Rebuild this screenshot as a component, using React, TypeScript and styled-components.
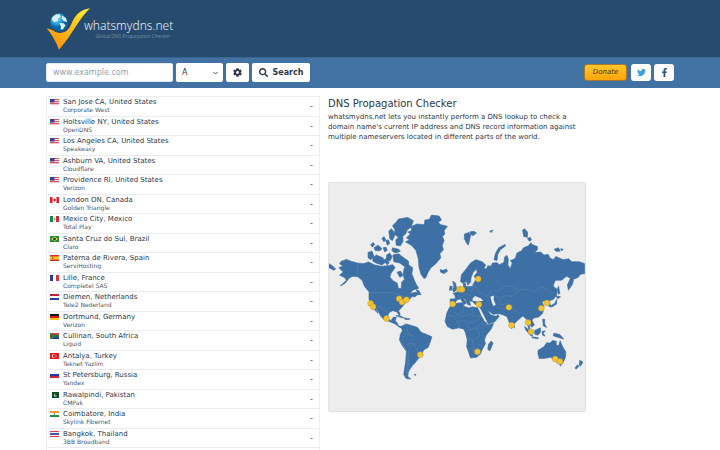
import React from "react";
import styled, { createGlobalStyle } from "styled-components";
import { FaCog, FaFacebookF, FaSearch, FaTwitter } from "react-icons/fa";

const GlobalStyle = createGlobalStyle`
  *, *::before, *::after { box-sizing: border-box; }
  body {
    margin: 0;
    background: #fff;
    color: #2d3748;
    font-family: "DejaVu Sans", sans-serif;
    font-size: 7px;
  }
  button, input, select { font-family: inherit; }
`;

const Header = styled.header`
  height: 57px;
  padding: 7px 46px 0;
  background: #264b6e;
`;

const Brand = styled.a`
  display: inline-flex;
  color: #e8eef5;
  text-decoration: none;
`;

const BrandMark = styled.svg`
  width: 45px;
  height: 43px;
`;

const BrandText = styled.span`
  display: flex;
  flex-direction: column;
  align-items: flex-end;
  margin-left: -7px;
  padding-top: 11px;
`;

const BrandName = styled.span`
  font: 300 12px/15px "Noto Sans", sans-serif;
`;

const Tagline = styled.span`
  padding-right: 3px;
  color: #8ba8c4;
  font: 300 5px/6px "Noto Sans", sans-serif;
`;

const Toolbar = styled.div`
  display: flex;
  align-items: center;
  justify-content: space-between;
  height: 31px;
  padding: 0 46px 1px;
  background: #4271a4;
  border-top: 1px solid #396693;
`;

const SearchForm = styled.form`
  display: flex;
  gap: 3px;
`;

const DomainInput = styled.input`
  width: 127px;
  height: 19px;
  padding: 0 6px;
  border: 1px solid #e2e8f0;
  border-radius: 2px;
  background: #fff;
  color: #4a5568;
  font-size: 8px;
  &::placeholder { color: #949fac; opacity: 1; }
`;

const SelectWrap = styled.label`
  display: flex;
  align-items: center;
  width: 47px;
  height: 19px;
  padding-right: 5px;
  border-radius: 2px;
  background: #fff;
`;

const TypeSelect = styled.select`
  flex: 1;
  min-width: 0;
  height: 19px;
  padding: 0 6px;
  border: 0;
  appearance: none;
  background: transparent;
  color: #2d3748;
  font-size: 8px;
`;

const Chevron = styled.svg`
  flex: none;
  width: 5px;
  height: 4px;
`;

const Button = styled.button<{ $width: number }>`
  display: flex;
  align-items: center;
  justify-content: center;
  gap: 5px;
  width: ${(p) => p.$width}px;
  height: 19px;
  padding: 0;
  border: 0;
  border-radius: 2px;
  background: #fff;
  color: #2d3748;
  font-size: 8px;
  font-weight: 700;
  svg { font-size: 9px; }
`;

const Actions = styled.nav`
  display: flex;
  align-items: center;
  gap: 3px;
`;

const Donate = styled.a`
  width: 43px;
  height: 17px;
  margin-right: 1px;
  border: 1px solid #a9782c;
  border-radius: 3px;
  background: linear-gradient(#ffc62b, #fba50a);
  color: #453313;
  font-size: 7px;
  font-style: italic;
  line-height: 15px;
  text-align: center;
  text-decoration: none;
`;

const SocialLink = styled.a<{ $color: string }>`
  display: flex;
  align-items: center;
  justify-content: center;
  width: 20px;
  height: 17px;
  border-radius: 3px;
  background: #fff;
  color: ${(p) => p.$color};
  font-size: 9px;
`;

const Content = styled.main`
  display: grid;
  grid-template-columns: minmax(0, 274fr) minmax(0, 258fr) 80px;
  column-gap: 8px;
  padding: 8px 46px 0;
`;

const ServerList = styled.ul`
  display: grid;
  grid-auto-rows: 20px 19px;
  margin: 0;
  padding: 0 0 2px;
  border: 1px solid #edf0f3;
  border-bottom: 0;
  list-style: none;
`;

const ServerRow = styled.li`
  display: grid;
  grid-template-columns: 9px 1fr auto;
  column-gap: 4px;
  padding: 0 6px 0 3px;
  border-bottom: 1px solid #e9edf1;
`;

const Flag = styled.svg`
  width: 9px;
  height: 6px;
  margin-top: 2px;
`;

const Place = styled.div`
  color: #2d3748;
  font-size: 7px;
  line-height: 10px;
  white-space: nowrap;
`;

const Provider = styled.div`
  color: #4a5568;
  font-size: 6px;
  line-height: 6px;
`;

const Result = styled.span`
  align-self: center;
  color: #4a5568;
  font-size: 8px;
`;

const About = styled.section`
  display: flex;
  flex-direction: column;
`;

const Title = styled.h1`
  margin: 0;
  font-size: 10px;
  font-weight: 400;
  line-height: 15px;
`;

const Description = styled.p`
  margin: 1px 0 40px;
  font-size: 7px;
  line-height: 10px;
`;

const WorldMap = styled.svg`
  display: block;
  width: 100%;
  border: 1px solid #e0e3e6;
  border-radius: 2px;
  background: #ededed;
`;

type Country =
  | "us" | "ca" | "mx" | "br" | "es" | "fr" | "nl" | "de" | "za"
  | "tr" | "ru" | "pk" | "in" | "th";

const bands = (...colors: string[]) =>
  colors.map((c, i) => (
    <rect key={i} y={(i * 12) / colors.length} width="18" height={12 / colors.length} fill={c} />
  ));

const flags: Record<Country, React.ReactNode> = {
  us: <>{bands("#d9525c", "#f7dcdf", "#d9525c", "#f7dcdf", "#d9525c", "#f0c4c9")}<rect width="9" height="7" fill="#3a3f96" /></>,
  ca: <><rect width="18" height="12" fill="#e01b24" /><rect x="5" width="8" height="12" fill="#fff" /><path d="M9 2l1 2 2 1-1 3H9.500v2h-1V8H7L6 5l2-1z" fill="#e01b24" /></>,
  mx: <><rect width="18" height="12" fill="#fff" /><rect width="6" height="12" fill="#138a4b" /><rect x="12" width="6" height="12" fill="#d4283b" /><circle cx="9" cy="6" r="2" fill="#a98a64" /></>,
  br: <><rect width="18" height="12" fill="#17902f" /><path d="M9 1l7 5-7 5-7-5z" fill="#f1d531" /><circle cx="9" cy="6" r="3" fill="#253d86" /></>,
  es: <><rect width="18" height="12" fill="#d62d2d" /><rect y="3" width="18" height="6" fill="#fbc92c" /><rect x="4" y="4" width="3" height="4" fill="#c3622d" /></>,
  fr: <><rect width="18" height="12" fill="#fff" /><rect width="6" height="12" fill="#2a3c98" /><rect x="12" width="6" height="12" fill="#e23240" /></>,
  nl: bands("#c4213a", "#fff", "#20429a"),
  de: bands("#151515", "#d91a1a", "#f7c614"),
  za: <>{bands("#dc3a32", "#fff", "#29409b")}<path d="M0 0h4l5 4h9v4H9l-5 4H0z" fill="#187b50" /><path d="M0 2l6 4-6 4z" fill="#151515" stroke="#f0b82c" /></>,
  tr: <><rect width="18" height="12" fill="#e51b24" /><circle cx="7" cy="6" r="3.500" fill="#fff" /><circle cx="8" cy="6" r="2.600" fill="#e51b24" /><circle cx="12" cy="6" r="1.200" fill="#fff" /></>,
  ru: bands("#f5f5f5", "#2438ad", "#d42434"),
  pk: <><rect width="18" height="12" fill="#0c4f22" /><rect width="4" height="12" fill="#fff" /><circle cx="11" cy="6" r="3" fill="#fff" /><circle cx="12" cy="5" r="2.600" fill="#0c4f22" /></>,
  in: <>{bands("#f69a35", "#fff", "#24923a")}<circle cx="9" cy="6" r="1.500" fill="#3a4597" /></>,
  th: bands("#db3d4c", "#f4f1f5", "#4f53a5", "#4f53a5", "#f4f1f5", "#db3d4c"),
};

const servers: [Country, string, string][] = [
  ["us", "San Jose CA, United States", "Corporate West"],
  ["us", "Holtsville NY, United States", "OpenDNS"],
  ["us", "Los Angeles CA, United States", "Speakeasy"],
  ["us", "Ashburn VA, United States", "Cloudflare"],
  ["us", "Providence RI, United States", "Verizon"],
  ["ca", "London ON, Canada", "Golden Triangle"],
  ["mx", "Mexico City, Mexico", "Total Play"],
  ["br", "Santa Cruz do Sul, Brazil", "Claro"],
  ["es", "Paterna de Rivera, Spain", "ServiHosting"],
  ["fr", "Lille, France", "Completel SAS"],
  ["nl", "Diemen, Netherlands", "Tele2 Nederland"],
  ["de", "Dortmund, Germany", "Verizon"],
  ["za", "Cullinan, South Africa", "Liquid"],
  ["tr", "Antalya, Turkey", "Teknet Yazlim"],
  ["ru", "St Petersburg, Russia", "Yandex"],
  ["pk", "Rawalpindi, Pakistan", "CMPak"],
  ["in", "Coimbatore, India", "Skylink Fibernet"],
  ["th", "Bangkok, Thailand", "3BB Broadband"],
];

const westernLand = [
  // North and Central America
  "48,243 65,237 80,243 98,248 115,250 132,245 150,254 170,258 190,256 205,253 212,262 200,278 196,290 206,302 218,308 222,325 230,325 232,305 240,298 236,280 240,262 250,268 262,280 270,300 276,313 283,324 265,330 258,340 272,336 285,340 272,350 262,350 255,358 246,365 236,377 228,387 222,392 227,402 225,408 218,396 205,392 195,397 190,405 192,418 200,422 206,412 216,412 212,422 219,430 222,438 232,440 238,446 226,443 212,432 195,425 178,419 168,408 163,398 153,383 150,380 160,400 150,390 140,372 133,358 133,335 120,320 112,300 100,290 85,288 75,292 60,310 46,317 65,300 58,291 44,285 55,275 42,262 54,257 44,250",
  // South America
  "230,440 245,432 262,437 280,443 290,457 305,463 323,471 318,487 312,503 298,511 292,525 280,540 272,550 265,557 258,567 252,577 250,590 259,599 245,597 238,585 240,570 244,545 246,515 232,495 225,480 228,463 234,453",
  // Greenland
  "243,184 256,178 246,172 258,160 250,154 262,150 260,138 278,130 300,132 302,118 315,116 322,103 345,106 352,118 342,125 350,132 370,137 360,150 362,160 355,168 360,180 354,195 358,208 347,220 350,232 335,250 320,262 312,275 305,292 299,295 290,282 284,260 282,235 275,210 262,195",
  // Ellesmere and Axel Heiberg
  "204,135 215,125 222,115 250,110 267,120 260,140 248,148 245,158 235,168 236,182 228,196 215,194 214,178 222,170 208,160 212,148",
  "193,152 200,144 206,150 210,165 204,180 196,175",
  // Baffin and Canadian archipelago
  "205,224 222,220 238,232 252,242 253,254 265,262 263,278 250,276 242,260 226,248 208,244",
  "145,232 155,224 175,232 182,246 172,254 154,248 144,242",
  "130,216 142,212 148,228 138,238 130,232",
  "186,224 196,218 203,230 196,242 186,238",
  "204,202 222,206 228,212 212,218 202,210",
  "138,192 146,186 150,192 143,200",
  "148,202 160,194 172,204 166,211 152,210",
  "172,174 178,168 184,178 178,184",
  "184,180 192,178 195,190 188,194",
  "176,202 184,200 188,210 180,214",
  "184,234 178,240 188,254 194,246",
  "218,276 228,272 236,286 226,291",
  // Newfoundland, Iceland, Alaskan islands
  "276,328 284,332 290,344 280,342",
  "348,268 358,270 367,266 370,273 360,280 350,276",
  "12,250 22,256 32,266 27,270 18,265 12,262",
  // Caribbean
  "214,407 228,408 240,414 230,413",
  "241,414 257,417 251,419 241,418",
  // Falklands
  "269,585 275,585 273,588",
];

const easternLand = [
  // Eurasia
  "-10,375 -12,357 5,356 2,345 -3,340 8,336 18,326 29,320 28,308 35,310 36,320 56,318 60,308 65,300 82,296 78,288 64,294 61,288 70,276 68,266 58,276 52,290 50,305 42,315 38,304 27,309 20,304 22,284 35,268 50,248 66,238 85,244 96,254 90,264 98,266 102,256 112,258 116,248 130,247 137,253 151,246 153,230 160,225 164,236 163,254 170,265 176,248 170,240 180,237 186,232 190,218 204,211 210,202 225,196 232,187 238,193 252,198 252,208 244,216 262,215 272,224 285,222 290,233 300,238 308,228 330,238 347,235 355,244 378,244 395,250 395,280 382,282 375,292 362,296 358,312 346,330 343,314 352,294 340,288 325,300 307,300 302,310 300,318 312,328 310,345 300,358 288,362 292,378 284,377 276,362 266,364 272,380 268,400 256,411 242,414 235,420 243,435 235,442 226,430 232,458 225,445 219,418 208,408 192,422 178,436 174,446 168,430 160,410 147,404 130,400 136,410 124,425 104,432 92,412 78,390 75,378 86,371 64,373 56,364 47,362 50,376 42,374 34,357 27,352 38,369 31,373 19,356 8,360 2,373",
  // Africa
  "-8,375 12,369 27,368 30,379 45,384 55,380 76,385 85,405 95,425 102,435 120,430 112,448 98,465 92,480 95,492 85,510 80,523 68,533 50,535 45,520 38,500 40,480 35,460 30,448 15,444 -5,448 -20,440 -27,425 -22,400 -15,385",
  // Arctic islands
  "32,160 44,156 50,164 47,178 43,194 37,186 31,174",
  "47,154 60,152 68,157 58,165 50,162",
  "108,151 118,149 112,156",
  "121,238 125,220 135,202 154,192 156,196 140,208 132,222 130,240",
  "207,149 213,144 222,154 222,170 211,168",
  "222,174 230,170 234,178 228,182",
  "303,206 316,202 321,212 308,212",
  "322,205 330,206 326,211",
  // British Isles
  "-4,303 4,308 9,328 -1,336 -5,328 0,320",
  "-12,318 -5,318 -8,330 -14,330",
  // Madagascar and Sri Lanka
  "112,484 118,490 108,514 102,508 104,494",
  "178,434 184,438 182,444 178,442",
  // Japan and Sakhalin
  "316,318 320,340 315,342 312,326",
  "308,347 322,350 314,356",
  "311,358 310,372 296,381 288,380 304,370",
  // South-east Asia
  "213,440 226,450 238,468 232,468 218,452",
  "236,471 255,474 254,477 236,474",
  "244,452 261,444 262,456 254,466 244,463",
  "266,455 276,453 270,460 275,469 268,466",
  "268,418 274,418 274,432 280,443 270,438",
  "302,460 320,464 332,478 316,473 300,468",
  // Australia, Tasmania, New Zealand
  "254,512 272,501 280,489 290,490 298,482 310,485 308,494 316,499 321,483 328,500 338,517 337,533 328,552 316,553 302,540 292,533 275,536 258,537 254,524",
  "319,553 325,554 322,560",
  "380,542 390,548 382,560 379,556",
  "373,556 378,560 369,569 366,565",
];

const seas = [
  "56,355 64,348 82,355 88,362 70,364 56,362",
  "110,350 120,347 120,360 126,374 119,378 114,366",
  "72,382 78,383 88,402 99,425 94,426 82,405",
  "103,392 118,404 132,402 128,408 112,404",
];

const westernBorders =
  "M98 248V290 M133 338H208L224 344 240 350 M146 375 172 384 190 400 M245 435 252 463 270 470 M246 515 232 485 246 462 M246 495 264 490 278 507 280 530 M250 525 255 560 248 585 M248 580 252 515";
const easternBorders =
  "M58 315 68 323 76 335 90 340 M96 352 116 330 132 333 150 320 172 317 194 330 220 326 242 335 263 319 285 330 300 340 M116 345 140 354 158 345 175 350 194 330 M138 357 142 374 160 370 172 360 M130 380 150 388 160 378 175 388 200 400 M50 300 60 322 50 340 M10 345 24 350 35 340 52 350 M0 395 22 410 48 403 70 410 85 410 M-20 405 0 410 12 430 24 420 48 430 78 418 M30 379 25 400 M55 382V405 M15 430V442 M38 430 47 450 68 444 78 430 105 440 M40 475 60 480 82 466 96 475 M40 508 62 508 78 495 92 500 M56 480 60 522 M68 444 78 466 M84 436 86 458";

const markers = [
  [126, 364], [133, 374], [212, 350], [221, 360], [234, 353], [174, 410],
  [276, 519], [374, 366], [395, 321], [402, 322], [451, 290], [453, 367],
  [544, 376], [552, 430], [602, 422], [611, 450], [642, 379], [659, 363],
  [449, 510], [684, 532], [698, 540],
];

const Land = ({ shapes, borders, x }: { shapes: string[]; borders: string; x: number }) => (
  <g transform={`translate(${x} -6)`}>
    {shapes.map((points) => (
      <polygon
        key={points}
        points={points}
        fill="#3d70a5"
        stroke="#3d70a5"
        strokeWidth="2"
        strokeLinejoin="round"
      />
    ))}
    <path d={borders} fill="none" stroke="#7198bf" strokeWidth="1" />
  </g>
);

export default function App() {
  return (
    <>
      <GlobalStyle />
      <Header>
        <Brand href="#">
          <BrandMark viewBox="18 20 134 130" aria-hidden="true">
            <defs>
              <linearGradient id="tick" x1="0" y1="1" x2="1" y2="0">
                <stop offset="0" stopColor="#f78a0c" />
                <stop offset="0.500" stopColor="#fdb81b" />
                <stop offset="1" stopColor="#fff02e" />
              </linearGradient>
              <radialGradient id="globe" cx="0.350" cy="0.300">
                <stop offset="0" stopColor="#8bdcf8" />
                <stop offset="0.600" stopColor="#27a0dc" />
                <stop offset="1" stopColor="#0865a8" />
              </radialGradient>
            </defs>
            <path d="M19 84Q38 88 55 98Q82 100 93 73C105 44 120 28 150 24C120 50 94 108 56 149Q43 112 19 84Z" fill="url(#tick)" />
            <circle cx="58" cy="66" r="32" fill="#264b6e" />
            <circle cx="57" cy="66" r="27" fill="url(#globe)" />
            <path d="M35 54Q43 40 58 42L62 50 54 54 52 62 42 66 36 61ZM66 46L77 53 81 65 71 63 64 55ZM57 68L70 69 76 75 68 88 61 87 62 78Z" fill="#d5f1f4" />
          </BrandMark>
          <BrandText>
            <BrandName>whatsmydns.net</BrandName>
            <Tagline>Global DNS Propagation Checker</Tagline>
          </BrandText>
        </Brand>
      </Header>
      <Toolbar>
        <SearchForm onSubmit={(e) => e.preventDefault()}>
          <DomainInput type="text" aria-label="Domain name" placeholder="www.example.com" />
          <SelectWrap>
            <TypeSelect aria-label="Record type" defaultValue="A">
              <option>A</option>
              <option>AAAA</option>
              <option>CNAME</option>
              <option>MX</option>
            </TypeSelect>
            <Chevron viewBox="0 0 10 8" aria-hidden="true">
              <path d="M1 2l4 4 4-4" fill="none" stroke="#4a5568" strokeWidth="2" />
            </Chevron>
          </SelectWrap>
          <Button type="button" aria-label="Options" $width={23}><FaCog /></Button>
          <Button type="submit" $width={58}><FaSearch />Search</Button>
        </SearchForm>
        <Actions>
          <Donate href="#">Donate</Donate>
          <SocialLink href="#" aria-label="Twitter" $color="#3ea1d8"><FaTwitter /></SocialLink>
          <SocialLink href="#" aria-label="Facebook" $color="#2f4f86"><FaFacebookF /></SocialLink>
        </Actions>
      </Toolbar>
      <Content>
        <ServerList>
          {servers.map(([country, place, provider]) => (
            <ServerRow key={place}>
              <Flag viewBox="0 0 18 12" aria-hidden="true">{flags[country]}</Flag>
              <div>
                <Place>{place}</Place>
                <Provider>{provider}</Provider>
              </div>
              <Result>-</Result>
            </ServerRow>
          ))}
        </ServerList>
        <About>
          <Title>DNS Propagation Checker</Title>
          <Description>
            whatsmydns.net lets you instantly perform a DNS lookup to check a domain name's
            current IP address and DNS record information against multiple nameservers located
            in different parts of the world.
          </Description>
          <WorldMap viewBox="0 0 774 690" role="img" aria-label="World map of DNS servers">
            <Land shapes={westernLand} borders={westernBorders} x={-12} />
            <Land shapes={easternLand} borders={easternBorders} x={378} />
            <g transform="translate(378 -6)" fill="#ededed">
              {seas.map((points) => <polygon key={points} points={points} />)}
            </g>
            <g fill="#f3c22f" stroke="#a98a3c" strokeWidth="1">
              {markers.map(([cx, cy]) => <circle key={`${cx}-${cy}`} cx={cx} cy={cy} r="9" />)}
            </g>
          </WorldMap>
        </About>
      </Content>
    </>
  );
}
